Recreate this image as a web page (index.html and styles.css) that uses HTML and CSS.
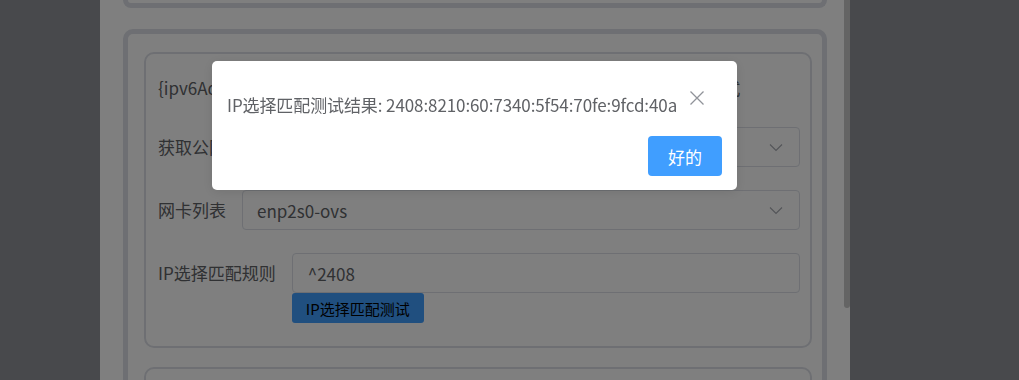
FILE: index.html
```html
<!DOCTYPE html>
<html lang="zh-CN">
<head>
<meta charset="utf-8">
<title>IP选择匹配测试</title>
<link rel="stylesheet" href="styles.css">
</head>
<body>
<div class="page">
  <main class="panel">
    <div class="card-tail"></div>
    <section class="card">
      <div class="group">
        <div class="row row-text">
          <span class="hint">{ipv6Addr} 会被替换为通过IP选择匹配规则获取到的公网IPv6地址 正则表达式</span>
        </div>
        <div class="row">
          <label class="label">获取公网IP方式</label>
          <div class="select">
            <span class="value">通过网卡获取</span>
            <svg class="chev" width="14" height="14" viewBox="0 0 14 14"><path d="M1 4.5 L7 10.5 L13 4.5" fill="none" stroke="#a8abb2" stroke-width="1.2"/></svg>
          </div>
        </div>
        <div class="row">
          <label class="label">网卡列表</label>
          <div class="select">
            <span class="value">enp2s0-ovs</span>
            <svg class="chev" width="14" height="14" viewBox="0 0 14 14"><path d="M1 4.5 L7 10.5 L13 4.5" fill="none" stroke="#a8abb2" stroke-width="1.2"/></svg>
          </div>
        </div>
        <div class="row row-last">
          <label class="label">IP选择匹配规则</label>
          <div class="field">
            <div class="input"><span class="value">^2408</span></div>
            <button class="test-btn" type="button">IP选择匹配测试</button>
          </div>
        </div>
      </div>
      <div class="group group-next"></div>
    </section>
    <div class="scroll-thumb"></div>
  </main>
</div>

<div class="overlay"></div>
<div class="msgbox" role="dialog">
  <div class="msg-row">
    <p class="msg">IP选择匹配测试结果: 2408:8210:60:7340:5f54:70fe:9fcd:40a</p>
    <button class="close" type="button" aria-label="关闭">
      <svg width="16" height="16" viewBox="0 0 16 16"><path d="M1.5 1.5 L14.5 14.5 M14.5 1.5 L1.5 14.5" stroke="#909399" stroke-width="1.3" fill="none"/></svg>
    </button>
  </div>
  <div class="msg-actions">
    <button class="ok" type="button">好的</button>
  </div>
</div>
</body>
</html>
```

FILE: styles.css
```css
* { box-sizing: border-box; }
html, body { margin: 0; padding: 0; height: 100%; }
body {
  background: #909399;
  font-family: "Noto Sans CJK SC", "Noto Sans", sans-serif;
  color: #606266;
  overflow: hidden;
}
.page { height: 100vh; display: flex; }
.panel {
  position: relative;
  margin-left: 100px;
  width: 750px;
  height: 100vh;
  background: #ffffff;
  padding: 0 23px 0 23px;
  overflow: hidden;
}
.card-tail {
  width: 704px;
  height: 8px;
  border: 5px solid #dcdfe6;
  border-top: 0;
  border-radius: 0 0 10px 10px;
}
.card {
  width: 704px;
  margin-top: 21px;
  border: 5px solid #dcdfe6;
  border-radius: 10px;
  padding: 18px 10px 0 16px;
}
.group {
  border: 2px solid #dcdfe6;
  border-radius: 10px;
  padding: 13px 10px 23px 12px;
}
.group-next { margin-top: 19px; height: 60px; }
.row {
  display: flex;
  align-items: flex-start;
  gap: 16px;
  margin-bottom: 23px;
  font-size: 17px;
}
.row-text { height: 40px; align-items: center; margin-bottom: 20px; overflow: hidden; white-space: nowrap; }
.row-last { margin-bottom: 0; }
.hint { color: #606266; }
.label {
  line-height: 40px;
  color: #606266;
  white-space: nowrap;
}
.select, .input {
  flex: 1;
  height: 40px;
  border: 1px solid #dcdfe6;
  border-radius: 4px;
  display: flex;
  align-items: center;
  justify-content: space-between;
  padding: 0 16px 0 14px;
  color: #606266;
}
.input { padding-left: 15px; }
.chev { display: block; }
.field { flex: 1; display: flex; flex-direction: column; align-items: flex-start; }
.input { width: 100%; flex: none; }
.test-btn {
  height: 30px;
  width: 132px;
  border: 0;
  border-radius: 3px;
  background: #409eff;
  color: #000;
  font-family: inherit;
  font-size: 15px;
  padding: 0;
}
.scroll-thumb {
  position: absolute;
  top: 0;
  right: 0;
  width: 6px;
  height: 308px;
  background: #c8c8c8;
  border-radius: 0 0 3px 3px;
}
.overlay {
  position: fixed;
  inset: 0;
  background: rgba(0, 0, 0, 0.5);
}
.msgbox {
  position: fixed;
  top: 61px;
  left: 212px;
  width: 525px;
  height: 129px;
  background: #fff;
  border-radius: 5px;
  box-shadow: 0 2px 12px rgba(0, 0, 0, 0.1);
  padding: 28px 15px 14px 15px;
}
.msg-row { display: flex; justify-content: space-between; align-items: flex-start; }
.msg {
  margin: 4px 0 0 0;
  font-size: 17px;
  line-height: 24px;
  letter-spacing: -0.1px;
  color: #606266;
  white-space: nowrap;
}
.close {
  border: 0;
  background: none;
  padding: 0;
  margin: 1px 17px 0 0;
  width: 16px;
  height: 16px;
  display: block;
  flex: none;
}
.close svg { display: block; }
.msg-actions { display: flex; justify-content: flex-end; margin-top: 19px; }
.ok {
  width: 74px;
  height: 40px;
  border: 0;
  border-radius: 4px;
  background: #409eff;
  color: #fff;
  font-family: inherit;
  font-size: 17px;
  padding: 0;
}
```
